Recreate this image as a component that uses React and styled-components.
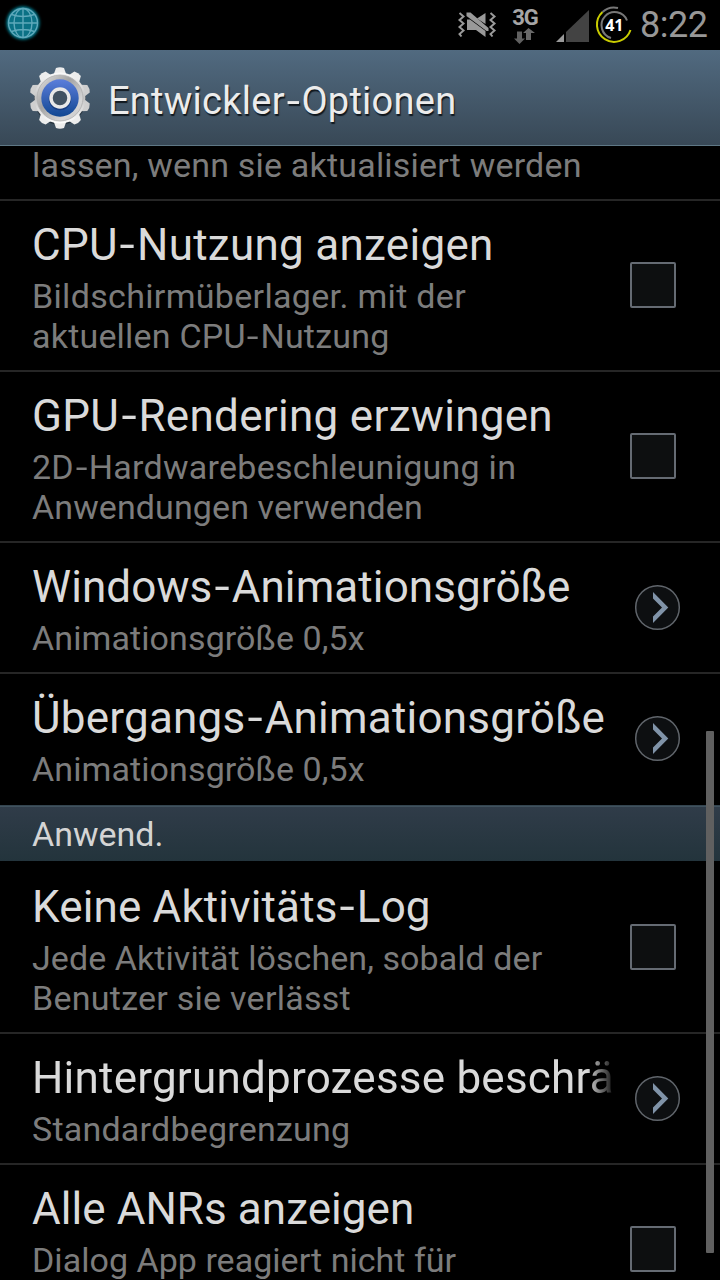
import React from 'react';
import styled, { createGlobalStyle } from 'styled-components';

const GlobalStyle = createGlobalStyle`
* { box-sizing: border-box; }
body {
  margin: 0;
  background: #000;
  font-family: Roboto, "Noto Sans", sans-serif;
}`;

const Screen = styled.div`
position: relative;
display: flex;
flex-direction: column;
width: 720px;
height: 1280px;
overflow: hidden;
background: #000;`;

const StatusBar = styled.header`
display: flex;
flex: none;
justify-content: space-between;
height: 50px;`;

const StatusIcons = styled.div`
display: flex;
padding-right: 12px;`;

const Network = styled.div`
display: flex;
flex-direction: column;
align-items: center;
width: 28px;
margin: 0 12px 0 13px;
padding-top: 8px;
color: #a5a5a5;
font-size: 22px;
font-weight: 700;
line-height: 20px;
letter-spacing: -1px;`;

const Clock = styled.time`
width: 68px;
margin-left: 7px;
color: #979797;
font-size: 36px;
line-height: 51px;
letter-spacing: -0.5px;
white-space: nowrap;`;

const TitleBar = styled.div`
display: flex;
flex: none;
align-items: center;
height: 96px;
padding-left: 28px;
background: linear-gradient(#516a80, #384856);
border-bottom: 1px solid #5f7886;`;

const Title = styled.h1`
margin: 7px 0 0 16px;
color: #ececec;
font-size: 38px;
font-weight: 400;
line-height: 46px;
letter-spacing: 0.26px;
text-shadow: 1px 2px 1px #10181f;`;

const List = styled.main`
flex: 1;
min-height: 0;
overflow: hidden;`;

const Row = styled.div`
display: flex;
align-items: center;
height: ${(p) => p.$height}px;
padding-left: 32px;
border-bottom: 2px solid ${(p) => (p.$last ? '#000' : '#262626')};`;

const CutRow = styled.div`
height: 55px;
padding-left: 32px;
border-bottom: 2px solid #262626;
overflow: hidden;`;

const Texts = styled.div`
align-self: flex-start;
width: 581px;
padding-top: 18px;`;

const Name = styled.div`
height: 57px;
overflow: hidden;
color: #dadada;
font-size: 44px;
line-height: 52px;
letter-spacing: ${(p) => p.$spacing || 0}px;
white-space: nowrap;
${(p) => p.$faded && 'mask-image: linear-gradient(to right, #000 555px, transparent 584px);'}`;

const Summary = styled.div`
color: #7c7c7c;
font-size: 34px;
line-height: ${(p) => p.$lineHeight || 40}px;
letter-spacing: ${(p) => p.$spacing || 0}px;
white-space: nowrap;`;

// Roboto's own hyphen is narrow, this one is stretched with more room around it
const Hyphen = styled.span`
display: inline-block;
margin: 0 0.08em;
letter-spacing: 0;
transform: scaleX(1.25);`;

const Checkbox = styled.span`
width: 46px;
height: 46px;
margin: 0 0 2px 17px;
background: #0d0f10;
border: 2px solid #656b73;
border-radius: 2px;`;

const Category = styled.h2`
height: 58px;
margin: 0;
padding-left: 32px;
background: linear-gradient(#303c49, #23343c) padding-box;
border-top: 1px solid #34444f;
border-bottom: 2px solid #000;
box-shadow: inset 0 1px #40525e;
color: #d4d4d4;
font-size: 34px;
font-weight: 400;
line-height: 56px;`;

const Scrollbar = styled.div`
position: absolute;
top: 731px;
right: 6px;
width: 8px;
height: 522px;
background: #606060;
border-radius: 1px;`;

const MoreIcon = styled.svg`
margin-left: 21px;`;

function GlobeIcon() {
  return (
    <svg width="46" height="50" viewBox="0 0 46 50" fill="none">
      <defs>
        <filter id="glow" x="-50%" y="-50%" width="200%" height="200%">
          <feGaussianBlur stdDeviation="1.8" />
        </filter>
      </defs>
      <circle cx="23" cy="23" r="16.500" fill="#08879c" filter="url(#glow)" />
      <circle cx="23" cy="23" r="14.500" fill="#0b7185" />
      <g stroke="#5fa9bb" strokeWidth="1.400">
        <circle cx="23" cy="23" r="14.500" />
        <ellipse cx="23" cy="23" rx="9" ry="14.500" />
        <path d="M23 8.500v29M8.500 23h29M11.500 14.500q11.500 4 23 0M11.500 31.500q11.500-4 23 0" />
      </g>
    </svg>
  );
}

function VibrateIcon() {
  return (
    <svg width="41" height="50" viewBox="457 0 41 50" fill="none">
      <path d="M477 18.500l8.500-5.500v11z" fill="#999" />
      <path d="M467 19.500l3 0 15.500 11.500v6l-9.500-7h-9z" fill="#999" />
      <path d="M466.500 12.500h4l18 15.500v3h-2l-20-15z" fill="#999" />
      <path
        d="M459.500 13l4 3.500-4 3.500 4 3.500-4 3.500 4 3.500-4 3.500 2 2.500M490.500 13l4 3.500-4 3.500 4 3.500-4 3.500 4 3.500-4 3.500 2 2.500"
        stroke="#999"
        strokeWidth="2"
      />
    </svg>
  );
}

function ArrowsIcon() {
  return (
    <svg width="22" height="16" viewBox="0 0 22 16">
      <path d="M3 3.500h5v7h3L5.500 16 0 10.500h3z" fill="#606060" />
      <path d="M12 12V5H9l5.500-5L21 5h-4v7z" fill="#686868" />
    </svg>
  );
}

function SignalIcon() {
  return (
    <svg width="42" height="50" viewBox="551 0 42 50">
      <path d="M564 34v8h-8z" fill="#999" />
      <path d="M589 10v32h-23V32z" fill="#434343" />
    </svg>
  );
}

function BatteryIcon() {
  return (
    <svg width="40" height="50" viewBox="593 0 40 50" fill="none">
      <path d="M630.500 30A17.200 17.200 0 1 1 602.500 12" stroke="#c9cc00" strokeWidth="2" />
      <path d="M602.500 12A17.200 17.200 0 0 1 618 8" stroke="#777" strokeWidth="2" />
      <path d="M611 38A13.200 13.200 0 1 1 627 20.500" stroke="#777" strokeWidth="2" />
      <text x="614.300" y="31" textAnchor="middle" fill="#fff" fontFamily="Open Sans" fontSize="16" fontWeight="700">
        41
      </text>
    </svg>
  );
}

const teeth = [0, 36, 72, 108, 144, 180, 216, 252, 288, 324];

function GearIcon() {
  return (
    <svg width="64" height="66" viewBox="-32 -33 64 66">
      <defs>
        <linearGradient id="silver" x1="0" y1="0" x2="0" y2="1">
          <stop offset="0" stopColor="#fafafa" />
          <stop offset="0.5" stopColor="#c4c4c4" />
          <stop offset="1" stopColor="#fff" />
        </linearGradient>
        <linearGradient id="rim" x1="0" y1="0" x2="1" y2="1">
          <stop offset="0" stopColor="#e6e6e6" />
          <stop offset="0.4" stopColor="#a4a4a4" />
          <stop offset="0.75" stopColor="#d6d6d6" />
          <stop offset="1" stopColor="#c4c4c4" />
        </linearGradient>
        <linearGradient id="blue" x1="0" y1="0" x2="0" y2="1">
          <stop offset="0" stopColor="#5b7edb" />
          <stop offset="1" stopColor="#114792" />
        </linearGradient>
      </defs>
      <circle r="26" cy="1" fill="#26333e" />
      {teeth.map((angle) => (
        <path
          key={angle}
          d="M-6.500-23l2.500-7q4-1.500 8 0l2.500 7z"
          transform={`rotate(${angle})`}
          fill={angle === 108 || angle === 252 || angle === 72 || angle === 288 ? '#cfcfcf' : '#ededed'}
        />
      ))}
      <circle r="25.500" fill="url(#silver)" />
      <circle r="23" fill="url(#rim)" stroke="#b0b0b0" strokeWidth="0.800" />
      <circle r="18.700" fill="url(#blue)" />
      <circle r="9.200" cy="1" fill="none" stroke="#173d80" strokeWidth="4" />
      <circle r="9" fill="#415262" stroke="#e8e8e8" strokeWidth="3.500" />
    </svg>
  );
}

function More() {
  return (
    <MoreIcon width="47" height="47" viewBox="0 0 47 47">
      <circle cx="23.500" cy="23.500" r="21.800" fill="#0d0f11" stroke="#60656b" strokeWidth="1.500" />
      <path d="M19 8l15.300 15.500L19 39v-6.500l9-9-9-9z" fill="#8093a8" />
    </MoreIcon>
  );
}

function Label({ text }) {
  const [first, rest] = text.split('-');
  if (rest === undefined) return text;
  return (
    <>
      {first}
      <Hyphen>-</Hyphen>
      {rest}
    </>
  );
}

function Setting({ name, spacing, lines, height, more, last, faded }) {
  return (
    <Row $height={height || 91 + lines.length * 40} $last={last}>
      <Texts>
        <Name $spacing={spacing} $faded={faded}>
          <Label text={name} />
        </Name>
        {lines.map(([text, lineSpacing]) => (
          <Summary key={text} $spacing={lineSpacing}>
            <Label text={text} />
          </Summary>
        ))}
      </Texts>
      {more ? <More /> : <Checkbox />}
    </Row>
  );
}

export default function App() {
  return (
    <Screen>
      <GlobalStyle />
      <StatusBar>
        <GlobeIcon />
        <StatusIcons>
          <VibrateIcon />
          <Network>
            3G
            <ArrowsIcon />
          </Network>
          <SignalIcon />
          <BatteryIcon />
          <Clock>8:22</Clock>
        </StatusIcons>
      </StatusBar>
      <TitleBar>
        <GearIcon />
        <Title>
          <Label text="Entwickler-Optionen" />
        </Title>
      </TitleBar>
      <List>
        <CutRow>
          <Summary $spacing={0.19} $lineHeight={38}>lassen, wenn sie aktualisiert werden</Summary>
        </CutRow>
        <Setting
          name="CPU-Nutzung anzeigen"
          spacing={0.28}
          lines={[['Bildschirmüberlager. mit der', 0.32], ['aktuellen CPU-Nutzung', 0.2]]}
        />
        <Setting
          name="GPU-Rendering erzwingen"
          spacing={0.3}
          lines={[['2D-Hardwarebeschleunigung in', 0.26], ['Anwendungen verwenden', 0.1]]}
        />
        <Setting name="Windows-Animationsgröße" spacing={0.1} lines={[['Animationsgröße 0,5x', 0.1]]} more />
        <Setting name="Übergangs-Animationsgröße" spacing={0.22} lines={[['Animationsgröße 0,5x', 0.1]]} more last />
        <Category>Anwend.</Category>
        <Setting
          name="Keine Aktivitäts-Log"
          spacing={0.15}
          lines={[['Jede Aktivität löschen, sobald der', 0.07], ['Benutzer sie verlässt', 0.26]]}
        />
        <Setting name="Hintergrundprozesse beschrä" spacing={0.22} lines={[['Standardbegrenzung', 0.22]]} more faded />
        <Setting
          name="Alle ANRs anzeigen"
          spacing={0.06}
          lines={[['Dialog App reagiert nicht für', 0.03]]}
          height={171}
        />
      </List>
      <Scrollbar />
    </Screen>
  );
}
